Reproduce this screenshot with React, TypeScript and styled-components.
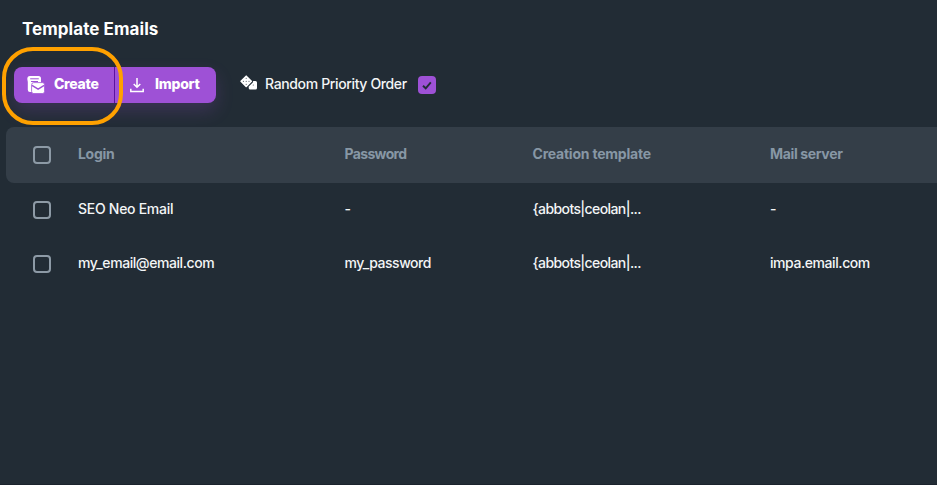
import React from "react";
import styled, { createGlobalStyle } from "styled-components";

const GlobalStyle = createGlobalStyle`
  * { box-sizing: border-box; }
  body {
    margin: 0;
    background: #222c35;
    color: #f3f5f6;
    font-family: Inter, "Liberation Sans", sans-serif;
    font-size: 14px;
    overflow: hidden;
  }
`;

const Page = styled.main`
  height: 485px;
  width: 937px;
  overflow: hidden;
  display: flex;
  flex-direction: column;
  border-bottom: 1px solid #1b232d;
`;

const Title = styled.h1`
  margin: 17px 0 0 22px;
  height: 24px;
  font-size: 17px;
  line-height: 24px;
  font-weight: 700;
  letter-spacing: 0.06px;
  color: #fff;
`;

const Toolbar = styled.div`
  display: flex;
  align-items: center;
  height: 36px;
  margin: 26px 0 0 14px;
`;

const ButtonGroup = styled.div`
  position: relative;
  display: flex;
  width: 202px;
  height: 36px;
  border-radius: 8px;
  background: #9e51d6;
  box-shadow: 0 8px 18px rgba(158, 81, 214, 0.2);
`;

const Button = styled.button<{ $width: number; $pad: number; $gap: number }>`
  display: flex;
  align-items: center;
  width: ${(p) => p.$width}px;
  padding: 0 0 0 ${(p) => p.$pad}px;
  gap: ${(p) => p.$gap}px;
  border: 0;
  background: none;
  color: #fff;
  font: inherit;
  font-weight: 800;
  & + & { border-left: 1px solid #5c12a0; }
  svg { flex: none; }
`;

const Label = styled.span<{ $track?: number }>`
  display: block;
  line-height: 20px;
  padding-bottom: 2px;
  white-space: nowrap;
  letter-spacing: ${(p) => p.$track ?? 0}px;
`;

const Highlight = styled.div`
  position: absolute;
  left: -12px;
  top: -20px;
  width: 121px;
  height: 78px;
  border: 4px solid #ffa100;
  border-radius: 31px;
  pointer-events: none;
`;

const Option = styled.label`
  display: flex;
  align-items: center;
  margin-left: 24px;
  font-weight: 500;
`;

const OptionText = styled.div`
  width: 153px;
  margin-left: 7px;
`;

const CheckBox = styled.span<{ $checked?: boolean }>`
  display: flex;
  align-items: center;
  justify-content: center;
  width: 18px;
  height: 18px;
  border-radius: 4px;
  border: ${(p) => (p.$checked ? "0" : "2px solid #8d9aa6")};
  background: ${(p) => (p.$checked ? "#9e51d6" : "transparent")};
`;

const Table = styled.section`
  margin: 24px 0 0 6px;
`;

const Row = styled.div<{ $header?: boolean }>`
  display: grid;
  grid-template-columns: 45px 266.5px 188px 237.5px 1fr;
  align-items: center;
  height: ${(p) => (p.$header ? 56 : 54)}px;
  padding-left: 27px;
  border-radius: 8px 0 0 8px;
  background: ${(p) => (p.$header ? "#343e48" : "transparent")};
  color: ${(p) => (p.$header ? "#8797a5" : "#f3f5f6")};
  font-weight: ${(p) => (p.$header ? 700 : 500)};
`;

const CreateIcon = () => (
  <svg width="18" height="18" viewBox="0 0 18 18">
    <path fill="#fff" d="M3 0H11.5Q14 0 14 2.5V7H7.5Q5 7 5 9V16H3Q.8 16 .8 13.8V6L.3 3Q.3 0 3 0Z" />
    <path stroke="#9e51d6" d="M3.2 2.8H11.8M4 5.5H11" />
    <rect x="4.6" y="6.6" width="13" height="11" rx="2.2" fill="#fff" stroke="#9e51d6" strokeWidth=".8" />
    <path fill="none" stroke="#9e51d6" strokeWidth="1.4" d="M5 9.3L11.1 13.2L17.2 9.3" />
  </svg>
);

const ImportIcon = () => (
  <svg width="14" height="15" viewBox="0 0 14 15" fill="none" stroke="#fff" strokeWidth="1.5">
    <path d="M7 0V9.3M3.7 6L7 9.3L10.3 6M.8 10.8V13.5H13.2V10.8" />
  </svg>
);

const DiceIcon = () => (
  <svg width="18" height="20" viewBox="0 0 18 20">
    <path fill="#fff" d="M13.2 6H15.5Q17 6 17 7.5V13Q17 14.5 15.5 14.5H10.2Q8.7 14.5 8.7 13V11.5L12.8 7.5Z" />
    <path fill="#fff" stroke="#fff" strokeWidth="1.6" strokeLinejoin="round" d="M6.2 1.2L11.3 6.3L6.2 11.4L1.1 6.3Z" />
    <g fill="#222c35" opacity=".75">
      <circle cx="6.2" cy="3.3" r=".6" /><circle cx="3.4" cy="6.3" r=".6" />
      <circle cx="6.2" cy="6.3" r=".6" /><circle cx="9" cy="6.3" r=".6" />
      <circle cx="6.2" cy="9.3" r=".6" /><circle cx="13.3" cy="10" r=".6" />
    </g>
  </svg>
);

const CheckIcon = () => (
  <svg width="10" height="9" viewBox="0 0 10 9" fill="none" stroke="#222c35" strokeWidth="1.9">
    <path d="M1 4.8L3.7 7.3L8.8 1.3" />
  </svg>
);

type Cell = [text: string, track: number];

const headers: Cell[] = [["Login", -0.3], ["Password", -0.65], ["Creation template", -0.22], ["Mail server", -0.35]];
const rows: Cell[][] = [
  [["SEO Neo Email", -0.28], ["-", 0], ["{abbots|ceolan|...", -0.6], ["-", 0]],
  [["my_email@email.com", -0.43], ["my_password", -0.47], ["{abbots|ceolan|...", -0.6], ["impa.email.com", -0.43]],
];

const TableRow = ({ cells, header }: { cells: Cell[]; header?: boolean }) => (
  <Row $header={header}>
    <CheckBox />
    {cells.map(([text, track], i) => (
      <Label key={i} $track={track}>{text}</Label>
    ))}
  </Row>
);

export default function App() {
  return (
    <Page>
      <GlobalStyle />
      <Title>Template Emails</Title>
      <Toolbar>
        <ButtonGroup>
          <Button $width={100} $pad={13} $gap={9}>
            <CreateIcon />
            <Label $track={-0.3}>Create</Label>
          </Button>
          <Button $width={102} $pad={15} $gap={11}>
            <ImportIcon />
            <Label $track={-0.25}>Import</Label>
          </Button>
          <Highlight />
        </ButtonGroup>
        <Option>
          <DiceIcon />
          <OptionText><Label $track={-0.36}>Random Priority Order</Label></OptionText>
          <CheckBox $checked><CheckIcon /></CheckBox>
        </Option>
      </Toolbar>
      <Table>
        <TableRow cells={headers} header />
        {rows.map((cells, i) => <TableRow key={i} cells={cells} />)}
      </Table>
    </Page>
  );
}
